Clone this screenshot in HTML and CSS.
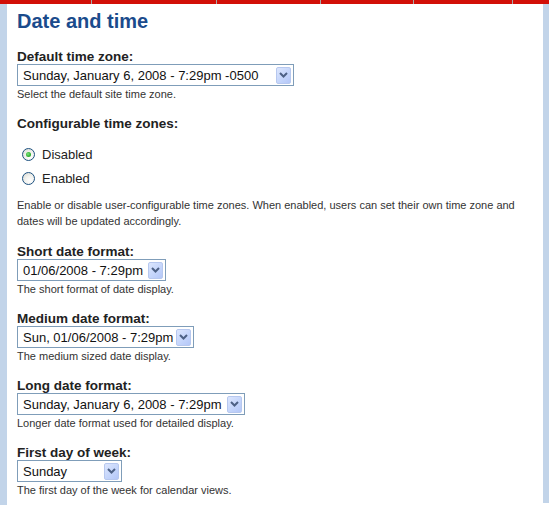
FILE: index.html
```html
<!DOCTYPE html>
<html lang="en">
<head>
<meta charset="utf-8">
<title>Date and time</title>
<link rel="stylesheet" href="styles.css">
</head>
<body>
<div class="topbar">
  <span class="seg s1"></span><span class="sep"></span>
  <span class="seg s2"></span><span class="sep"></span>
  <span class="seg s3"></span><span class="sep"></span>
  <span class="seg s4"></span><span class="sep"></span>
  <span class="seg s5"></span><span class="sep"></span>
  <span class="seg s6"></span>
</div>
<div class="frame">
  <div class="rail"></div>
  <main class="content">
    <h1 class="title">Date and time</h1>

    <div class="field">
      <div class="label">Default time zone:</div>
      <div class="select w-zone"><span class="value">Sunday, January 6, 2008 - 7:29pm -0500</span><span class="arrow"><svg width="9" height="6" viewBox="0 0 9 6"><path d="M1 1 L4.5 4.5 L8 1" fill="none" stroke="#4d6185" stroke-width="2"/></svg></span></div>
      <div class="desc">Select the default site time zone.</div>
    </div>

    <div class="field">
      <div class="label">Configurable time zones:</div>
      <div class="radios">
        <div class="radio-row"><span class="radio checked"></span><span>Disabled</span></div>
        <div class="radio-row"><span class="radio"></span><span>Enabled</span></div>
      </div>
      <div class="desc long">Enable or disable user-configurable time zones. When enabled, users can set their own time zone and dates will be updated accordingly.</div>
    </div>

    <div class="field">
      <div class="label">Short date format:</div>
      <div class="select w-short"><span class="value">01/06/2008 - 7:29pm</span><span class="arrow"><svg width="9" height="6" viewBox="0 0 9 6"><path d="M1 1 L4.5 4.5 L8 1" fill="none" stroke="#4d6185" stroke-width="2"/></svg></span></div>
      <div class="desc">The short format of date display.</div>
    </div>

    <div class="field">
      <div class="label">Medium date format:</div>
      <div class="select w-medium"><span class="value">Sun, 01/06/2008 - 7:29pm</span><span class="arrow"><svg width="9" height="6" viewBox="0 0 9 6"><path d="M1 1 L4.5 4.5 L8 1" fill="none" stroke="#4d6185" stroke-width="2"/></svg></span></div>
      <div class="desc">The medium sized date display.</div>
    </div>

    <div class="field">
      <div class="label">Long date format:</div>
      <div class="select w-long"><span class="value">Sunday, January 6, 2008 - 7:29pm</span><span class="arrow"><svg width="9" height="6" viewBox="0 0 9 6"><path d="M1 1 L4.5 4.5 L8 1" fill="none" stroke="#4d6185" stroke-width="2"/></svg></span></div>
      <div class="desc">Longer date format used for detailed display.</div>
    </div>

    <div class="field">
      <div class="label">First day of week:</div>
      <div class="select w-day"><span class="value">Sunday</span><span class="arrow"><svg width="9" height="6" viewBox="0 0 9 6"><path d="M1 1 L4.5 4.5 L8 1" fill="none" stroke="#4d6185" stroke-width="2"/></svg></span></div>
      <div class="desc">The first day of the week for calendar views.</div>
    </div>
  </main>
  <div class="rail right"></div>
</div>
</body>
</html>
```

FILE: styles.css
```css
html, body {
  margin: 0;
  padding: 0;
  background: #ffffff;
}

body {
  font-family: "Liberation Sans", Arial, sans-serif;
  color: #222222;
  height: 505px;
  display: flex;
  flex-direction: column;
  overflow: hidden;
}

/* red navigation strip across the top */
.topbar {
  display: flex;
  height: 4px;
  flex: none;
}
.seg { background: #d20f07; height: 4px; }
.sep { background: #a8a8a8; width: 1px; height: 4px; }
.s1 { width: 91px; }
.s2 { width: 124px; }
.s3 { width: 103px; }
.s4 { width: 92px; }
.s5 { width: 98px; }
.s6 { flex: 1; }

.frame {
  flex: 1;
  display: flex;
}

.rail {
  width: 7px;
  background: #c2d4e9;
  flex: none;
}
.rail.right {
  width: 6px;
  margin-bottom: 2px;
}

.content {
  flex: 1;
  padding: 5px 0 0 10px;
}

.title {
  margin: 0;
  font-size: 20px;
  line-height: 24px;
  font-weight: bold;
  color: #1b4b8c;
}

.field {
  margin-top: 16px;
}
.field:first-of-type {
  margin-top: 17px;
}

.label {
  font-size: 13.5px;
  line-height: 14px;
  font-weight: bold;
  color: #222222;
}

.select {
  height: 22px;
  box-sizing: border-box;
  border: 1px solid #7f9db9;
  background: #ffffff;
  display: flex;
  align-items: center;
  justify-content: space-between;
  padding: 0 2px 0 5px;
  font-size: 13px;
  color: #111111;
}
.w-zone { width: 277px; }
.w-short { width: 149px; }
.w-medium { width: 177px; }
.w-long { width: 228px; }
.w-day { width: 105px; }

.value { white-space: nowrap; }

.arrow {
  width: 15px;
  height: 17px;
  box-sizing: border-box;
  border: 1px solid #b7c8ef;
  border-radius: 2px;
  background: linear-gradient(135deg, #dce6fd 0%, #c3d4fb 60%, #b4c7f8 100%);
  display: flex;
  align-items: center;
  justify-content: center;
}
.arrow svg { display: block; }

.desc {
  margin-top: 1px;
  font-size: 11px;
  line-height: 14px;
  color: #333333;
}
.desc.long {
  margin-top: 9px;
  line-height: 16px;
}

.radios {
  margin-top: 13px;
  display: flex;
  flex-direction: column;
  gap: 4px;
}
.radio-row {
  display: flex;
  align-items: center;
  height: 20px;
  padding-left: 5px;
  font-size: 13px;
  color: #222222;
}
.radio {
  width: 13px;
  height: 13px;
  box-sizing: border-box;
  border: 1px solid #1c5180;
  border-radius: 50%;
  background: radial-gradient(circle at 65% 70%, #ffffff 0%, #f2f2ee 45%, #d6d6cf 100%);
  margin-right: 7px;
  display: flex;
  align-items: center;
  justify-content: center;
}
.radio.checked::after {
  content: "";
  width: 5px;
  height: 5px;
  border-radius: 50%;
  background: radial-gradient(circle at 40% 40%, #7fe27f 0%, #2fb02f 60%, #1d8a1d 100%);
}
```
